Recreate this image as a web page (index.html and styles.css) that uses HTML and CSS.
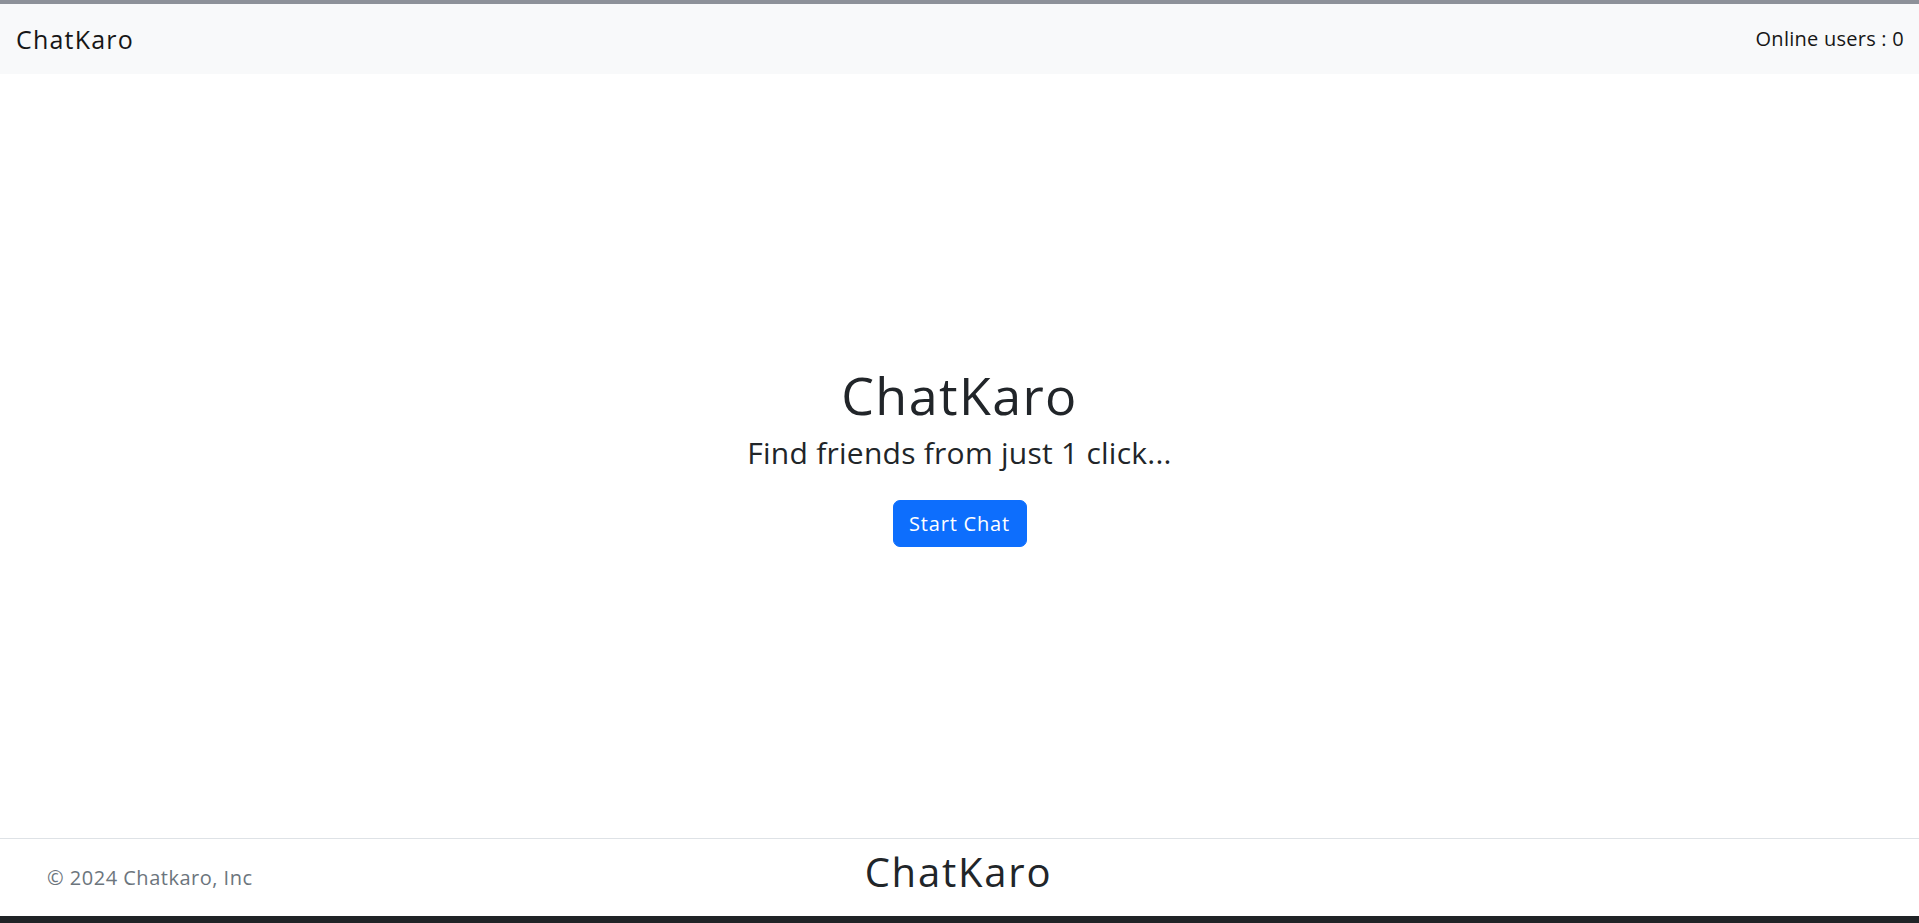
FILE: index.html
```html
<!DOCTYPE html>
<html lang="en">
<head>
<meta charset="utf-8">
<title>ChatKaro</title>
<link rel="stylesheet" href="styles.css">
</head>
<body>
<div class="page">
  <div class="top-strip"></div>
  <nav class="navbar">
    <span class="brand">ChatKaro</span>
    <span class="online">Online users : 0</span>
  </nav>
  <main class="hero">
    <h1 class="hero-title">ChatKaro</h1>
    <p class="hero-sub">Find friends from just 1 click...</p>
    <button class="btn-start">Start Chat</button>
  </main>
  <footer class="footer">
    <span class="copy">© 2024 Chatkaro, Inc</span>
    <span class="footer-brand">ChatKaro</span>
    <span class="footer-right"></span>
  </footer>
  <div class="bottom-strip"></div>
</div>
</body>
</html>
```

FILE: styles.css
```css
* { box-sizing: border-box; }
html, body { margin: 0; padding: 0; }
body {
  font-family: "Open Sans", "Noto Sans", sans-serif;
  color: #212529;
  background: #ffffff;
  overflow: hidden;
}
.page {
  display: flex;
  flex-direction: column;
  height: 923px;
}
.top-strip {
  height: 4px;
  background: #8d9199;
}
.navbar {
  height: 70px;
  background: #f8f9fa;
  display: flex;
  align-items: center;
  justify-content: space-between;
  padding: 0 15px 0 16px;
}
.brand {
  font-size: 25px;
  line-height: 30px;
  letter-spacing: 1.2px;
  color: #161616;
}
.online {
  font-size: 20px;
  line-height: 24px;
  letter-spacing: 0.25px;
  color: #161616;
}
.hero {
  flex: 1;
  display: flex;
  flex-direction: column;
  align-items: center;
  justify-content: center;
}
.hero-title {
  margin: 0;
  font-weight: 400;
  font-size: 52px;
  line-height: 60px;
  letter-spacing: 1.4px;
}
.hero-sub {
  margin: 10px 0 29px 0;
  font-size: 30px;
  line-height: 36px;
  letter-spacing: 0.25px;
}
.btn-start {
  font-family: inherit;
  font-size: 20px;
  line-height: 28px;
  letter-spacing: 0.8px;
  color: #fff;
  background: #0d6efd;
  border: 1px solid #0d6efd;
  border-radius: 7px;
  width: 134px;
  height: 47px;
  padding: 0;
}
.footer {
  height: 78px;
  border-top: 1px solid #dee2e6;
  display: grid;
  grid-template-columns: 1fr auto 1fr;
  align-items: center;
  padding: 0 47px;
}
.copy {
  font-size: 20px;
  line-height: 24px;
  letter-spacing: 0.5px;
  color: #6c757d;
}
.footer-brand {
  font-size: 40px;
  line-height: 48px;
  letter-spacing: 1.8px;
  color: #212529;
  padding-bottom: 12px;
  margin-left: -2px;
}
.bottom-strip {
  height: 7px;
  background: #202326;
}
```
